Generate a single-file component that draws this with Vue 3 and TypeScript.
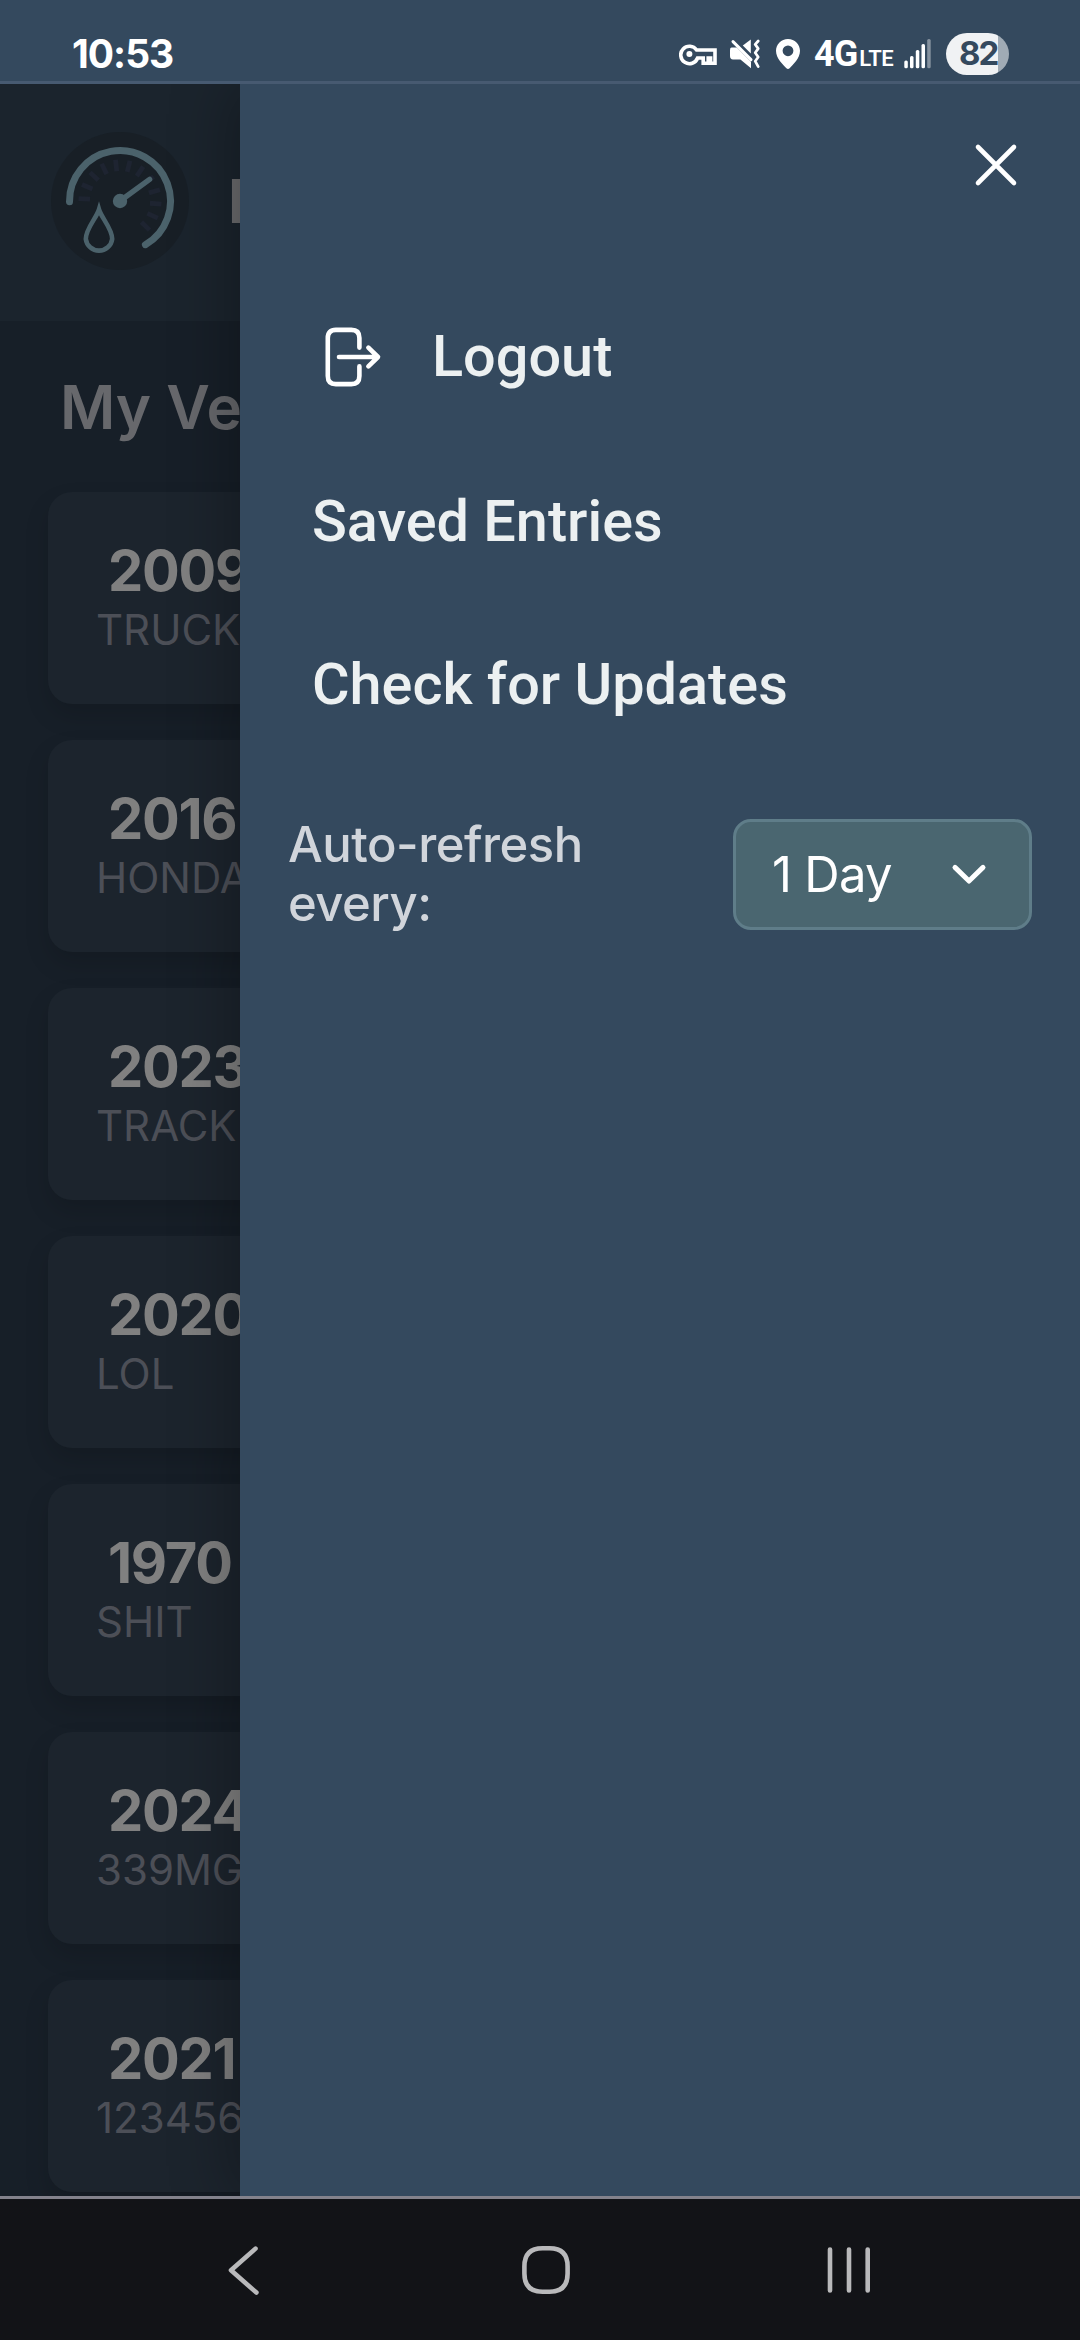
<script setup lang="ts">
interface Vehicle {
  name: string
  plate: string
}

const vehicles: Vehicle[] = [
  { name: '2009', plate: 'TRUCK' },
  { name: '2016', plate: 'HONDA' },
  { name: '2023', plate: 'TRACK' },
  { name: '2020', plate: 'LOL' },
  { name: '1970', plate: 'SHIT' },
  { name: '2024', plate: '339MG' },
  { name: '2021', plate: '123456' },
]

// Dial marks, in degrees clockwise from the left end of the gauge.
const ticks: number[] = Array.from({ length: 12 }, (_, i) => 3.4 + i * 20.1)
</script>

<template>
  <div class="screen">
    <header class="status">
      <span class="clock">10:53</span>
      <div class="indicators">
        <svg class="key" width="38" height="22" viewBox="0 0 38 22">
          <path d="M17.6 6H36V19.2H31.6V14H29.2V19.2H24.2V14H18.6A8.7 8.7 0 1 1 17.6 6Z" fill="none" stroke="#fff" stroke-width="3.6" />
          <circle cx="10.4" cy="10" r="3" fill="#fff" />
        </svg>
        <svg class="mute" width="30" height="30" viewBox="0 0 30 30">
          <path d="M12.8 6.6L20.8.6V14.6Z" fill="#fff" />
          <path d="M1.6 8.6H6.8L21 22.8V29.2L10.4 20.4H3Q0 20.4 0 17V11Q0 8.6 1.6 8.6Z" fill="#fff" />
          <path d="M3 2.6L21 20.6" fill="none" stroke="#fff" stroke-width="3" stroke-linecap="round" />
          <path d="M28.2 2L25.2 5.4L28.2 9.6L25.2 13.8L28.2 18L25.2 22.2L28.2 27.6" fill="none" stroke="#fff" stroke-width="2.7" stroke-linecap="round" stroke-linejoin="round" />
        </svg>
        <svg class="pin" width="24" height="30" viewBox="0 0 24 30">
          <path fill-rule="evenodd" d="M12 0C5.2 0 0 5.2 0 11.8C0 19.6 7 25.4 10.4 29.2Q12 30.6 13.6 29.2C17 25.4 24 19.6 24 11.8C24 5.2 18.8 0 12 0ZM12 6.4A5.4 5.4 0 1 1 12 17.2A5.4 5.4 0 0 1 12 6.4Z" fill="#fff" />
        </svg>
        <span class="network">4G<small>LTE</small></span>
        <svg class="signal" width="27" height="30" viewBox="0 0 27 30">
          <g fill="#fff">
            <rect x="0.3" y="21.6" width="3.5" height="7.6" rx="1.5" />
            <rect x="6" y="17" width="3.5" height="12.2" rx="1.5" />
            <rect x="11.8" y="11" width="3.5" height="18.2" rx="1.5" />
            <rect x="17.5" y="5" width="3.5" height="24.2" rx="1.5" />
            <rect x="23.2" y="0" width="3.5" height="29.2" rx="1.5" fill-opacity="0.4" />
          </g>
        </svg>
        <span class="battery">82</span>
      </div>
    </header>

    <div class="content">
      <main class="app">
        <div class="topbar">
          <svg class="logo" width="138" height="138" viewBox="-69 -69 138 138">
            <circle r="69" fill="#181f26" />
            <g stroke="#1e2431" stroke-width="4.8">
              <path v-for="t in ticks" :key="t" d="M-41.5 0H-30" :transform="`rotate(${t})`" />
            </g>
            <g fill="none" stroke="#4b626b" stroke-linecap="round">
              <path d="M-50.5 .8A50.5 50.5 0 1 1 25.4 43.7" stroke-width="7" />
              <path d="M0 0L29.6 -21.6" stroke-width="5.4" />
              <path d="M-21 8.5C-23.5 17-34.2 27.5-34.2 38A13.3 13.3 0 0 0-7.8 38C-7.8 27.5-18.5 17-21 8.5Z" stroke-width="4.6" stroke-linejoin="miter" />
            </g>
            <circle r="7.2" fill="#4b626b" />
          </svg>
          <span class="brand">F</span>
        </div>
        <h1 class="heading">My Ve</h1>
        <section class="list">
          <article v-for="v in vehicles" :key="v.name" class="card">
            <div class="name">{{ v.name }}</div>
            <div class="plate">{{ v.plate }}</div>
          </article>
        </section>
      </main>

      <aside class="drawer">
        <div class="drawer-top">
          <svg width="48" height="48" viewBox="0 0 48 48">
            <path d="M6 6L42 42M42 6L6 42" stroke="#fff" stroke-width="4.6" stroke-linecap="round" />
          </svg>
        </div>
        <nav class="menu">
          <a class="item logout">
            <svg width="60" height="64" viewBox="0 0 60 64" fill="none" stroke="#fff" stroke-width="4.6" stroke-linecap="round" stroke-linejoin="round">
              <path d="M37.4 23.6V14Q37.4 5.9 29.4 5.9H13.8Q5.8 5.9 5.8 14V52Q5.8 60.1 13.8 60.1H29.4Q37.4 60.1 37.4 52V42.4" />
              <path d="M17 33H56M46.4 23.6L56 33L46.4 42.4" />
            </svg>
            <span>Logout</span>
          </a>
          <a class="item">Saved Entries</a>
          <a class="item">Check for Updates</a>
        </nav>
        <div class="refresh">
          <span class="label">Auto-refresh every:</span>
          <div class="select">
            <span>1 Day</span>
            <svg width="36" height="24" viewBox="0 0 36 24">
              <path d="M4 4.4L18 18L32 4.4" fill="none" stroke="#fff" stroke-width="5" stroke-linecap="round" stroke-linejoin="round" />
            </svg>
          </div>
        </div>
      </aside>
    </div>

    <footer class="navbar">
      <svg width="36" height="52" viewBox="0 0 36 52">
        <path d="M29.5 4.6L5 26.3L30.4 48.6" />
      </svg>
      <svg class="home" width="52" height="52" viewBox="0 0 52 52">
        <path d="M26 4.3H29.5Q47.6 4.3 47.6 22.4V29.6Q47.6 47.7 29.5 47.7H22.5Q4.4 47.7 4.4 29.6V22.4Q4.4 4.3 22.5 4.3Z" />
      </svg>
      <svg width="48" height="52" viewBox="0 0 48 52">
        <path d="M5 5.6V46.4M24 5.6V46.4M42.7 5.6V46.4" />
      </svg>
    </footer>
  </div>
</template>

<style>
body {
  margin: 0;
  background: #121317;
}
</style>

<style scoped>
.screen {
  width: 1080px;
  height: 2340px;
  display: flex;
  flex-direction: column;
  overflow: hidden;
  font-family: Inter, 'Liberation Sans', sans-serif;
}

svg {
  display: block;
  flex: none;
}

/* Status bar */
.status {
  box-sizing: border-box;
  height: 84px;
  flex: none;
  display: flex;
  justify-content: space-between;
  padding: 0 71px 0 72px;
  background: #34495e;
  border-bottom: 3px solid #475a71;
  color: #fff;
}

.clock {
  margin-top: 33px;
  font-size: 39px;
  line-height: 42px;
  font-weight: 700;
  letter-spacing: -1px;
}

.indicators {
  display: flex;
  align-items: flex-start;
  white-space: nowrap;
}

.key {
  margin-top: 44px;
}

.mute {
  margin: 39px 0 0 13px;
}

.pin {
  margin: 39px 0 0 16px;
}

.network {
  width: 82px;
  margin: 33px 0 0 14px;
  font-family: Roboto, sans-serif;
  font-size: 36px;
  line-height: 42px;
  font-weight: 700;
  letter-spacing: -1px;
}

.network small {
  margin-left: 2px;
  font-size: 22px;
  font-weight: 600;
  letter-spacing: -0.4px;
}

.signal {
  margin: 39px 0 0 8px;
}

.battery {
  box-sizing: border-box;
  width: 63px;
  height: 42px;
  margin: 33px 0 0 15px;
  padding-left: 13px;
  border-radius: 21px;
  background: linear-gradient(90deg, #f0f2f4 52px, #a0abb5 52px);
  color: #34495e;
  font-size: 33px;
  line-height: 41px;
  font-weight: 700;
  letter-spacing: -2px;
}

/* Page beneath the drawer */
.content {
  position: relative;
  height: 2112px;
  flex: none;
  display: flex;
  overflow: hidden;
  background: #171f28;
}

.app {
  width: 240px;
  flex: none;
}

.topbar {
  box-sizing: border-box;
  height: 237px;
  display: flex;
  align-items: center;
  padding: 0 0 3px 51px;
  background: #1b242d;
}

.brand {
  margin-left: 39px;
  color: #6c6c6e;
  font-size: 60px;
  line-height: 72px;
  font-weight: 700;
}

.heading {
  margin: 49px 0 0;
  padding-left: 60px;
  color: #67686c;
  font-size: 60px;
  line-height: 74px;
  font-weight: 600;
  white-space: nowrap;
}

.list {
  display: flex;
  flex-direction: column;
  gap: 36px;
  padding: 48px 0 0 48px;
}

.card {
  box-sizing: border-box;
  width: 984px;
  height: 212px;
  padding: 45px 48px 43px;
  border-radius: 24px;
  background: #1c242d;
  box-shadow: 0 12px 24px rgba(0, 0, 0, 0.14);
}

.name {
  padding-left: 12px;
  color: #808080;
  font-size: 56px;
  line-height: 68px;
  font-weight: 700;
  letter-spacing: -1.3px;
}

.plate {
  color: #4c4f57;
  font-size: 42px;
  line-height: 50px;
}

/* Drawer */
.drawer {
  position: relative;
  width: 840px;
  flex: none;
  background: #34495e;
  box-shadow: -6px 0 60px rgba(0, 0, 0, 0.3);
}

.drawer-top {
  display: flex;
  justify-content: flex-end;
  padding: 57px 60px 84px 0;
}

.item {
  display: flex;
  align-items: center;
  height: 163px;
  padding-left: 72px;
  color: #ecf0f1;
  font-family: Roboto, sans-serif;
  font-size: 57.6px;
  font-weight: 500;
  white-space: nowrap;
}

.logout {
  height: 166px;
  margin-bottom: 1px;
  padding-left: 82px;
  gap: 50px;
}

.refresh {
  display: flex;
  align-items: center;
  justify-content: space-between;
  margin: 53px 48px 0;
  height: 111px;
}

.label {
  width: 380px;
  margin-bottom: 2px;
  color: #d1d5db;
  font-size: 49px;
  line-height: 59px;
  font-weight: 500;
  letter-spacing: -0.5px;
}

.select {
  box-sizing: border-box;
  width: 299px;
  height: 111px;
  display: flex;
  align-items: center;
  justify-content: space-between;
  padding: 0 42px 0 36px;
  border: 3px solid #5f7d89;
  border-radius: 18px;
  background: #4a6670;
  color: #fff;
  font-size: 49px;
  letter-spacing: -0.7px;
}

/* System navigation */
.navbar {
  box-sizing: border-box;
  height: 144px;
  display: flex;
  align-items: center;
  justify-content: space-between;
  padding: 0 207px 0 226px;
  border-top: 3px solid #83828c;
  background: #121317;
}

.navbar svg {
  fill: none;
  stroke: #b9b9bb;
  stroke-width: 4.6;
  stroke-linecap: round;
  stroke-linejoin: round;
}

.navbar .home {
  margin-left: 5px;
}
</style>
